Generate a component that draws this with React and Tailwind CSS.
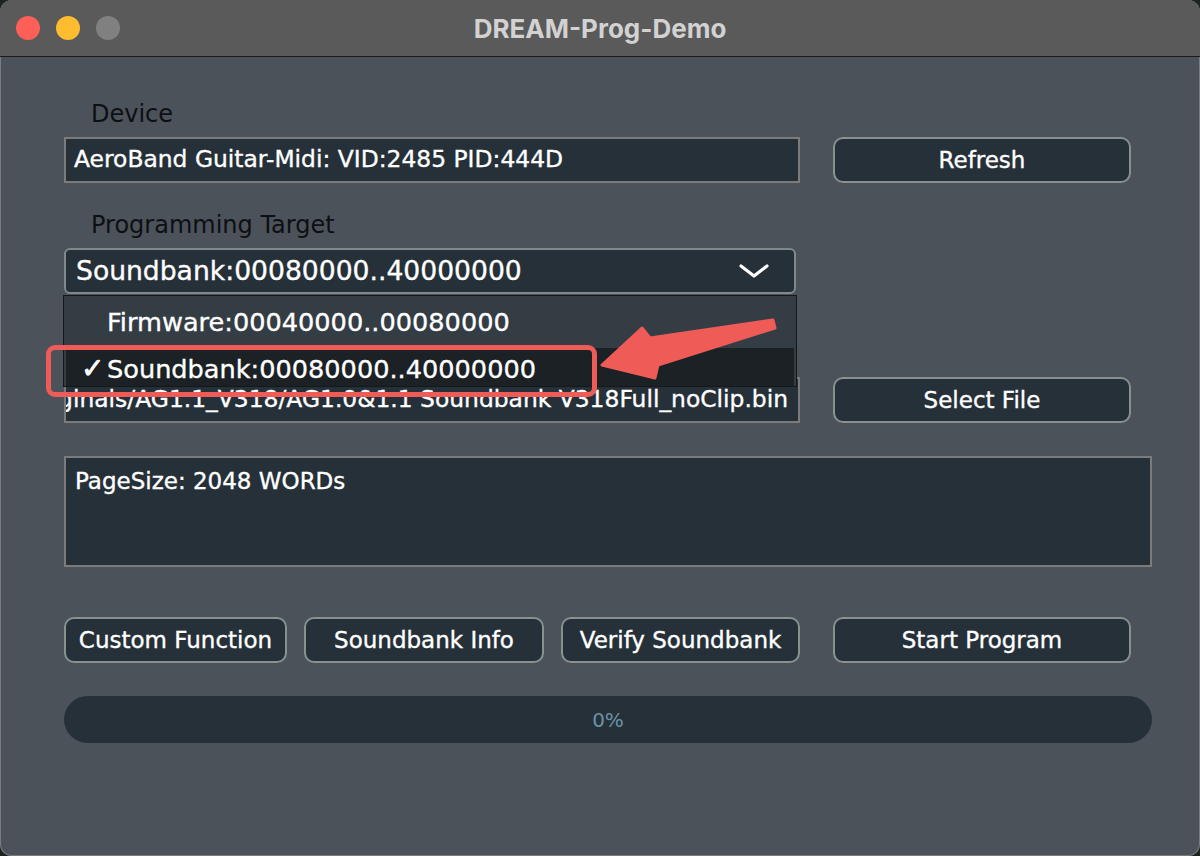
import React from 'react';

const ui = { fontFamily: '"DejaVu Sans", "Liberation Sans", sans-serif' };

const Button = ({ children, className = '' }) => (
  <button
    className={`h-[46px] rounded-[10px] border-2 border-[#87928f] bg-[#263038] text-[23px] text-white leading-none [-webkit-text-stroke:0.35px_white] ${className}`}
    style={ui}
  >
    {children}
  </button>
);

const Label = ({ children }) => (
  <div className="h-[30px] pl-[27px] text-[24px] leading-[30px] text-[#0d1013]" style={ui}>
    {children}
  </div>
);

const App = () => {
  return (
    <div className="w-[1200px] h-[856px] bg-[#1d2420]">
      <div className="relative w-[1200px] h-[856px] rounded-[12px] overflow-hidden bg-[#4b5259] ring-1 ring-inset ring-[#7c7c7c]">
        {/* title bar */}
        <div className="flex items-center h-[57px] bg-[#5a5a5a] border-b border-[#1c1c1c]">
          <div className="flex items-center gap-[16px] pl-[16px] w-[140px]">
            <span className="w-[24px] h-[24px] rounded-full bg-[#fe5f57]" />
            <span className="w-[24px] h-[24px] rounded-full bg-[#febc2e]" />
            <span className="w-[24px] h-[24px] rounded-full bg-[#808080]" />
          </div>
          <div
            className="flex-1 text-center text-[26px] font-bold text-[#d2d2d2]"
            style={{ fontFamily: 'Inter, "Liberation Sans", sans-serif' }}
          >
            DREAM-Prog-Demo
          </div>
          <div className="w-[140px]" />
        </div>

        {/* body */}
        <div className="pt-[42px] pl-[64px]">
          <Label>Device</Label>
          <div className="flex mt-[8px] h-[46px]">
            <div
              className="w-[736px] h-[46px] border-2 border-[#7b7b7b] bg-[#263038] pl-[8px] flex items-center text-[23.4px] text-white whitespace-nowrap [-webkit-text-stroke:0.35px_white]"
              style={ui}
            >
              AeroBand Guitar-Midi: VID:2485 PID:444D
            </div>
            <Button className="ml-[33px] w-[298px]">Refresh</Button>
          </div>

          <div className="mt-[27px]">
            <Label>Programming Target</Label>
          </div>
          <div className="relative mt-[8px] w-[732px] h-[46px]">
            <div
              className="flex items-center justify-between h-[46px] rounded-[6px] border-2 border-[#7f898b] bg-[#263038] pl-[10px] pr-[24px] text-[26.6px] text-white [-webkit-text-stroke:0.35px_white]"
              style={ui}
            >
              <span>Soundbank:00080000..40000000</span>
              <svg width="32" height="18" viewBox="0 0 32 18" fill="none">
                <polyline points="3,4 16,14 29,4" stroke="white" strokeWidth="3.2" strokeLinecap="round" strokeLinejoin="round" />
              </svg>
            </div>

            {/* open popup menu */}
            <div
              className="absolute left-[-1px] top-[47px] z-10 w-[734px] h-[92px] bg-[#343d44] border border-[#14181b] pb-[2px] text-[25.6px] text-white [-webkit-text-stroke:0.35px_white]"
              style={ui}
            >
              <div className="flex items-center h-[52px] pl-[43px]">Firmware:00040000..00080000</div>
              <div className="flex items-center h-[38px] mr-[2px] ml-[2px] bg-[#1b2125] pl-[15px] pt-[4px]">
                <span className="w-[26px] text-[28px] leading-none font-bold [-webkit-text-stroke:0.8px_white]">✓</span>
                Soundbank:00080000..40000000
              </div>
            </div>
          </div>

          <div className="flex mt-[83px] h-[46px]">
            <div
              className="w-[736px] h-[46px] border-2 border-[#7b7b7b] bg-[#263038] pr-[10px] flex items-center justify-end overflow-hidden text-[23.4px] text-white whitespace-nowrap [-webkit-text-stroke:0.35px_white]"
              style={ui}
            >
              /Users/dream/Desktop/Originals/AG1.1_V318/AG1.0&amp;1.1 Soundbank V318Full_noClip.bin
            </div>
            <Button className="ml-[33px] w-[298px]">Select File</Button>
          </div>

          <div
            className="mt-[33px] w-[1088px] h-[111px] border-2 border-[#7b7b7b] bg-[#263038] pl-[9px] pt-[8px] text-[23px] leading-[30px] text-white [-webkit-text-stroke:0.35px_white]"
            style={ui}
          >
            PageSize: 2048 WORDs
          </div>

          <div className="flex mt-[50px] h-[46px]">
            <Button className="w-[223px]">Custom Function</Button>
            <Button className="ml-[17px] w-[240px]">Soundbank Info</Button>
            <Button className="ml-[17px] w-[239px]">Verify Soundbank</Button>
            <Button className="ml-[33px] w-[298px]">Start Program</Button>
          </div>

          <div
            className="mt-[33px] w-[1088px] h-[47px] rounded-full bg-[#263039] flex items-center justify-center text-[20px] text-[#6b93a6]"
            style={ui}
          >
            0%
          </div>
        </div>

        {/* annotation */}
        <div className="absolute left-[46px] top-[345px] w-[551px] h-[52px] z-20 rounded-[9px] border-[5px] border-[#ef5b57]" />
        <svg className="absolute left-0 top-0 z-20" width="1200" height="856" viewBox="0 0 1200 856" style={{ pointerEvents: 'none' }}>
          <polygon
            points="602,365 642,328 650,338 773,320 775,328 658,365 655,378"
            fill="#ef5b57"
            stroke="#ef5b57"
            strokeWidth="3"
            strokeLinejoin="round"
          />
        </svg>
      </div>
    </div>
  );
};

export default App;
